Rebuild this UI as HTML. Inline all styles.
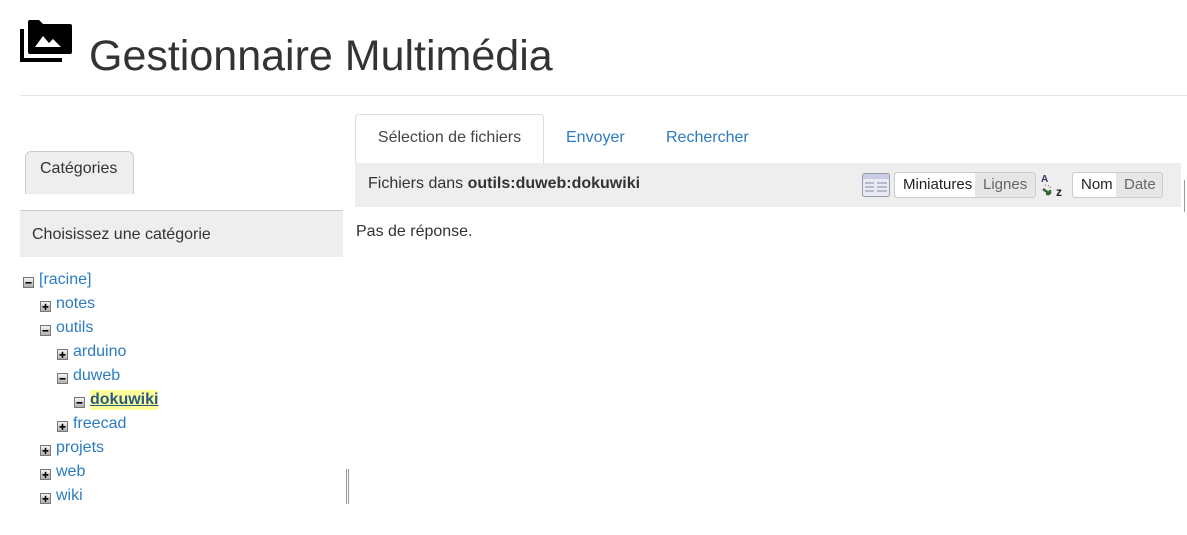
<!DOCTYPE html>
<html><head><meta charset="utf-8"><style>
*{margin:0;padding:0;box-sizing:border-box}
body{width:1187px;height:535px;background:#fff;font-family:"Liberation Sans",sans-serif;color:#333;position:relative;overflow:hidden}
.a{position:absolute;white-space:nowrap}
.lk{color:#2b7bc0}
.bx{position:absolute;width:11px;height:11px}
.t{position:absolute;font-size:16px;line-height:20px;color:#2b7bc0}
</style></head><body>
<svg width="0" height="0" style="position:absolute"><defs>
<linearGradient id="g" x1="0" y1="0" x2="0" y2="1"><stop offset="0" stop-color="#fafafa"/><stop offset="1" stop-color="#aaa"/></linearGradient>
<symbol id="m" viewBox="0 0 11 11"><rect x="0.5" y="0.5" width="10" height="10" fill="url(#g)" stroke="#777"/><rect x="2.5" y="5" width="6" height="1.6" fill="#000"/></symbol>
<symbol id="pl" viewBox="0 0 11 11"><rect x="0.5" y="0.5" width="10" height="10" fill="url(#g)" stroke="#777"/><rect x="2.5" y="5" width="6" height="1.6" fill="#000"/><rect x="4.7" y="2.8" width="1.6" height="6" fill="#000"/></symbol>
</defs></svg>
<svg class="a" style="left:20px;top:20px" width="54" height="46" viewBox="0 0 54 46">
<path d="M0 9h4v29h38v4H0z" fill="#000"/>
<path d="M8 2a2 2 0 0 1 2-2h9l4 4h27a2 2 0 0 1 2 2v26a2 2 0 0 1-2 2H10a2 2 0 0 1-2-2z" fill="#000"/>
<path d="M15 27l8-11 6 7 4-4 8 8z" fill="#fff"/>
</svg>
<div class="a" style="left:89px;top:30px;font-size:43px;line-height:52px;color:#333">Gestionnaire Multimédia</div>
<div class="a" style="left:20px;top:95px;width:1167px;height:1px;background:#e5e5e5"></div>

<div class="a" style="left:25px;top:151px;width:109px;height:43px;background:#eee;border:1px solid #ccc;border-bottom:none;border-radius:6px 6px 0 0;font-size:16px;padding:8px 0 0 14px">Catégories</div>
<div class="a" style="left:20px;top:210px;width:323px;height:47px;background:#eee;border-top:1px solid #ccc;font-size:16px;padding:15px 0 0 12px">Choisissez une catégorie</div>

<svg class="bx" style="left:23px;top:277px"><use href="#m"/></svg><div class="t" style="left:39px;top:270px">[racine]</div>
<svg class="bx" style="left:40px;top:301px"><use href="#pl"/></svg><div class="t" style="left:56px;top:294px">notes</div>
<svg class="bx" style="left:40px;top:325px"><use href="#m"/></svg><div class="t" style="left:56px;top:318px">outils</div>
<svg class="bx" style="left:57px;top:349px"><use href="#pl"/></svg><div class="t" style="left:73px;top:342px">arduino</div>
<svg class="bx" style="left:57px;top:373px"><use href="#m"/></svg><div class="t" style="left:73px;top:366px">duweb</div>
<svg class="bx" style="left:74px;top:397px"><use href="#m"/></svg><div class="t" style="left:90px;top:390px;font-weight:bold;color:#2a5a84;background:#ff9;text-decoration:underline">dokuwiki</div>
<svg class="bx" style="left:57px;top:421px"><use href="#pl"/></svg><div class="t" style="left:73px;top:414px">freecad</div>
<svg class="bx" style="left:40px;top:445px"><use href="#pl"/></svg><div class="t" style="left:56px;top:438px">projets</div>
<svg class="bx" style="left:40px;top:469px"><use href="#pl"/></svg><div class="t" style="left:56px;top:462px">web</div>
<svg class="bx" style="left:40px;top:493px"><use href="#pl"/></svg><div class="t" style="left:56px;top:486px">wiki</div>
<div class="a" style="left:346px;top:469px;width:3px;height:35px;border-left:1px solid #999;border-right:1px solid #999"></div>

<div class="a" style="left:355px;top:114px;width:189px;height:50px;background:#fff;border:1px solid #ddd;border-bottom:none;border-radius:4px 4px 0 0;font-size:16px;text-align:center;padding-top:14px;color:#444">Sélection de fichiers</div>
<div class="a lk" style="left:566px;top:129px;font-size:16px">Envoyer</div>
<div class="a lk" style="left:666px;top:129px;font-size:16px">Rechercher</div>
<div class="a" style="left:355px;top:163px;width:826px;height:44px;background:#eee"></div>
<div class="a" style="left:368px;top:175px;font-size:16px">Fichiers dans <b>outils:duweb:dokuwiki</b></div>
<svg class="a" style="left:862px;top:173px" width="28" height="24"><rect x="0.5" y="0.5" width="27" height="23" rx="2" fill="#e8eaf4" stroke="#99a"/><rect x="1" y="1" width="26" height="5" fill="#c8cce4"/><path d="M3 10h9M15 10h10M3 14h9M15 14h10M3 18h9M15 18h10" stroke="#aab" stroke-width="1.5"/></svg>
<div class="a" style="left:894px;top:172px;width:142px;height:26px;border:1px solid #ccc;border-radius:3px;background:#e6e6e6;font-size:15px"><span style="display:inline-block;width:80px;height:24px;background:#fff;border-radius:3px 0 0 3px;padding:3px 0 0 8px;color:#222">Miniatures</span><span style="position:absolute;left:88px;top:3px;color:#666">Lignes</span></div>
<svg class="a" style="left:1040px;top:172px" width="28" height="28"><text x="1" y="10" font-family="Liberation Sans" font-weight="bold" font-size="10" fill="#336">A</text><path d="M5 13l4 1M10 15l2 2" stroke="#555" stroke-width="1" stroke-dasharray="1 2"/><path d="M3 17l7 5M10 22l-4 0M10 22l0-4" stroke="#363" stroke-width="2.5" fill="none"/><text x="16" y="24" font-family="Liberation Sans" font-weight="bold" font-size="12" fill="#222">z</text></svg>
<div class="a" style="left:1072px;top:172px;width:91px;height:26px;border:1px solid #ccc;border-radius:3px;background:#e6e6e6;font-size:15px"><span style="display:inline-block;width:43px;height:24px;background:#fff;border-radius:3px 0 0 3px;padding:3px 0 0 8px;color:#222">Nom</span><span style="position:absolute;left:51px;top:3px;color:#666">Date</span></div>
<div class="a" style="left:1184px;top:180px;width:1px;height:32px;background:#999"></div>
<div class="a" style="left:356px;top:223px;font-size:16px">Pas de réponse.</div>
</body></html>
